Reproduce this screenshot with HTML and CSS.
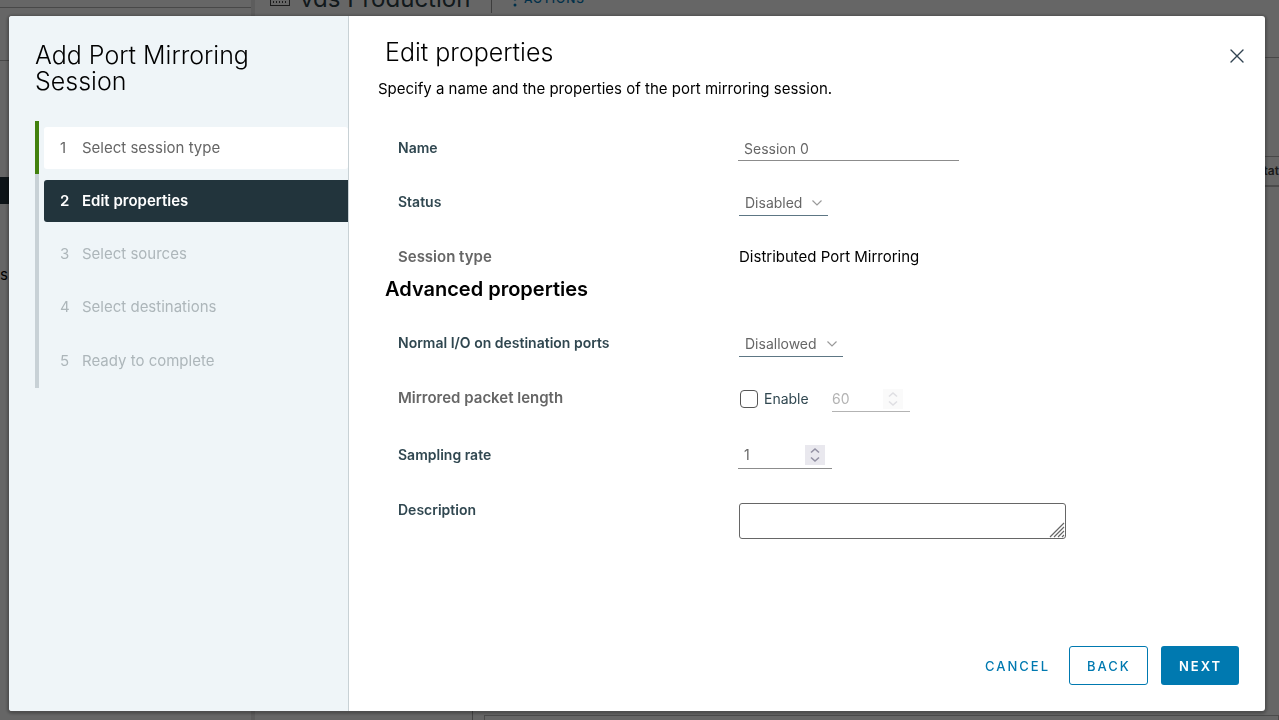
FILE: index.html
```html
<!DOCTYPE html>
<html lang="en">
<head>
<meta charset="utf-8">
<title>Add Port Mirroring Session</title>
<link rel="stylesheet" href="styles.css">
</head>
<body>
<div class="app" aria-hidden="true">
  <div class="app-nav">
    <div class="app-nav-tabs"></div>
    <div class="app-nav-filter"></div>
    <div class="app-nav-tree"></div>
    <div class="app-nav-selected"></div>
    <div class="app-nav-item">s</div>
  </div>
  <div class="app-gutter"></div>
  <div class="app-main">
    <div class="app-header">
      <svg class="app-icon" width="20" height="16" viewBox="0 0 20 16" fill="none" stroke="currentColor"><rect x="0.5" y="1.5" width="19" height="14"/><path d="M3.5 11v2M6.5 11v2M9.5 11v2M12.5 11v2M15.5 11v2"/></svg>
      <span class="app-name">vds Production</span>
      <span class="app-rule"></span>
      <svg class="app-dots" width="4" height="16" viewBox="0 0 4 16" fill="currentColor"><circle cx="2" cy="2" r="1.500"/><circle cx="2" cy="8" r="1.500"/><circle cx="2" cy="14" r="1.500"/></svg>
      <span class="app-actions">ACTIONS</span>
    </div>
    <div class="app-panel"></div>
    <div class="app-columns">Stat</div>
    <div class="app-body"></div>
    <div class="app-footer"><div class="app-footer-left"></div><div class="app-footer-gap"></div><div class="app-footer-right"></div></div>
  </div>
</div>

<div class="backdrop">
  <div class="wizard" role="dialog" aria-modal="true" aria-labelledby="wizard-title">
    <aside class="sidebar">
      <h1 class="wizard-title" id="wizard-title">Add Port Mirroring Session</h1>
      <nav class="steps" aria-label="Steps">
        <div class="step step-done"><button class="step-button" type="button"><span class="step-number">1</span>Select session type</button></div>
        <div class="step step-current"><button class="step-button" type="button" aria-current="step"><span class="step-number">2</span>Edit properties</button></div>
        <div class="step"><button class="step-button" type="button" disabled><span class="step-number">3</span>Select sources</button></div>
        <div class="step"><button class="step-button" type="button" disabled><span class="step-number">4</span>Select destinations</button></div>
        <div class="step"><button class="step-button" type="button" disabled><span class="step-number">5</span>Ready to complete</button></div>
      </nav>
    </aside>
    <main class="content">
      <header class="content-header">
        <h2 class="page-title">Edit properties</h2>
        <button class="close" type="button" aria-label="Close"><svg width="14" height="14" viewBox="0 0 14 14" fill="none" stroke="currentColor" stroke-width="1.4" stroke-linecap="round"><path d="M1 1l12 12M13 1L1 13"/></svg></button>
      </header>
      <p class="intro">Specify a name and the properties of the port mirroring session.</p>
      <form class="form">
        <div class="group">
          <div class="row">
            <label class="label" for="name">Name</label>
            <input class="field name-field" id="name" type="text" value="Session 0">
          </div>
          <div class="row">
            <label class="label" for="status">Status</label>
            <span class="select-wrap">
              <select class="field select status-field" id="status"><option>Disabled</option><option>Enabled</option></select>
              <svg class="chevron" width="10" height="6" viewBox="0 0 10 6" fill="none" stroke="currentColor" stroke-width="1.200"><path d="M0.5 0.5L5 5l4.500-4.500"/></svg>
            </span>
          </div>
          <div class="row">
            <span class="label label-muted">Session type</span>
            <span class="value">Distributed Port Mirroring</span>
          </div>
        </div>
        <h3 class="section-title">Advanced properties</h3>
        <div class="group">
          <div class="row">
            <label class="label" for="normal-io">Normal I/O on destination ports</label>
            <span class="select-wrap">
              <select class="field select io-field" id="normal-io"><option>Disallowed</option><option>Allowed</option></select>
              <svg class="chevron" width="10" height="6" viewBox="0 0 10 6" fill="none" stroke="currentColor" stroke-width="1.200"><path d="M0.5 0.5L5 5l4.500-4.500"/></svg>
            </span>
          </div>
          <div class="row">
            <label class="label label-muted" for="length">Mirrored packet length</label>
            <div class="controls">
              <input class="checkbox" id="enable" type="checkbox">
              <label class="check-label" for="enable">Enable</label>
              <span class="number number-disabled">
                <input class="number-input" id="length" type="number" value="60" disabled>
                <svg class="spinner" width="20" height="20" viewBox="0 0 20 20" fill="none" stroke="currentColor" stroke-width="1.600"><path d="M6 7.500L10 4l4 3.500M6 12.500L10 16l4-3.500"/></svg>
              </span>
            </div>
          </div>
          <div class="row row-center">
            <label class="label" for="rate">Sampling rate</label>
            <span class="number number-wide">
              <input class="number-input" id="rate" type="number" value="1">
              <svg class="spinner" width="20" height="20" viewBox="0 0 20 20" fill="none" stroke="currentColor" stroke-width="1.600"><path d="M6 7.500L10 4l4 3.500M6 12.500L10 16l4-3.500"/></svg>
            </span>
          </div>
          <div class="row">
            <label class="label" for="description">Description</label>
            <span class="textarea-wrap">
              <textarea class="textarea" id="description" rows="1"></textarea>
              <svg class="grip" width="16" height="16" viewBox="0 0 16 16" fill="none" stroke="currentColor" stroke-width="1.200"><path d="M1 15L15 1M5 15L15 5M9 15l6-6M13 15l2-2"/></svg>
            </span>
          </div>
        </div>
      </form>
      <footer class="actions">
        <button class="button button-link" type="button">CANCEL</button>
        <button class="button button-outline" type="button">BACK</button>
        <button class="button button-primary" type="button">NEXT</button>
      </footer>
    </main>
  </div>
</div>
</body>
</html>
```
FILE: styles.css
```css
* { box-sizing: border-box; }

body {
  margin: 0;
  height: 100vh;
  overflow: hidden;
  background: #fff;
  color: #000;
  font: 15px/24px Inter, "Liberation Sans", sans-serif;
}

button, input, select, textarea { font: inherit; color: inherit; margin: 0; }
h1, h2, h3, p { margin: 0; font-weight: 400; }

/* Application behind the dialog */
.app { display: flex; height: 100vh; overflow: hidden; }
.app-nav { flex: 0 0 251px; }
.app-nav-tabs { height: 8px; border-bottom: 1px solid #b5b5b5; }
.app-nav-filter { height: 53px; border-bottom: 1px solid #b5b5b5; }
.app-nav-tree { height: 116px; }
.app-nav-selected { height: 27px; background: #22343c; }
.app-nav-item { padding-top: 59px; }
.app-gutter { flex: 0 0 4px; background: #e8e8e8; }
.app-main { flex: 1; min-width: 0; display: flex; flex-direction: column; }
.app-header {
  flex: 0 0 78px;
  margin-top: -20px;
  padding: 0 15px;
  display: flex;
  align-items: flex-start;
  border-bottom: 1px solid #b5b5b5;
  color: #2d4048;
}
.app-icon { margin: 10px 10px 0 0; color: #444; }
.app-name { flex: 0 0 191px; margin-top: 3px; font-size: 24px; line-height: 32px; white-space: nowrap; }
.app-rule { width: 1px; height: 33px; margin-right: 21px; background: #999; }
.app-dots { margin: 11px 7px 0 0; color: #0079b8; }
.app-actions { margin-top: 11px; color: #0079b8; font-size: 12px; line-height: 16px; letter-spacing: 1px; font-weight: 500; }
.app-panel { flex: 0 0 99px; border-bottom: 1px solid #b5b5b5; }
.app-columns { flex: 0 0 29px; border-bottom: 2px solid #bbb; text-align: right; font-size: 12px; line-height: 28px; font-weight: 600; color: #444; }
.app-body { flex: 1; }
.app-footer { flex: 0 0 12px; display: flex; }
.app-footer-left { width: 218px; border-right: 1px solid #aaa; }
.app-footer-gap { width: 11px; }
.app-footer-right { flex: 1; margin-top: 7px; border: 1px solid #bbb; border-bottom: 0; }

/* Dialog */
.backdrop {
  position: fixed;
  inset: 0;
  display: flex;
  padding: 16px 14px 9px 9px;
  background: rgba(0, 0, 0, 0.6);
}
.wizard {
  flex: 1;
  display: flex;
  overflow: hidden;
  background: #fff;
  border-radius: 3px;
  box-shadow: 0 1px 3px 2px rgba(0, 0, 0, 0.25);
}

/* Steps */
.sidebar { flex: 0 0 340px; padding: 26px 0 0 26px; background: #eff5f8; border-right: 1px solid #c8d1d5; }
.wizard-title { width: 240px; margin-bottom: 27px; font-size: 25px; line-height: 26px; font-weight: 300; }
.step { display: flex; align-items: center; height: 53px; padding-left: 5px; border-left: 4px solid #c8d1d6; }
.step:last-child { height: 55px; }
.step-done { border-left-color: #42810e; }
.step-button {
  flex: 1;
  display: flex;
  height: 42px;
  padding: 0 16px;
  align-items: center;
  border: 0;
  border-radius: 3px;
  background: transparent;
  color: #adb6ba;
  text-align: left;
}
.step-number { flex: 0 0 22px; }
.step-done .step-button { background: #fff; color: #666; }
.step-current .step-button { background: #22343c; color: #fff; font-weight: 600; border-radius: 3px 0 0 3px; }

/* Page */
.content { flex: 1; min-width: 0; display: flex; flex-direction: column; padding: 20px 26px 26px 29px; }
.content-header { display: flex; justify-content: space-between; padding-left: 7px; }
.page-title { font-size: 25px; line-height: 32px; font-weight: 300; }
.close { display: grid; place-items: center; width: 20px; height: 20px; margin: 10px -8px 0 0; padding: 0; border: 0; background: none; color: #314351; }
.intro { margin-top: 9px; }
.form { flex: 1; padding: 35px 0 0 7px; }
.group { display: flex; flex-direction: column; gap: 29px; padding-left: 13px; }
.row { display: grid; grid-template-columns: 340px minmax(0, 1fr); align-items: start; justify-items: start; }
.row-center { align-items: center; }
.label { font-size: 14px; font-weight: 600; color: #304750; }
.label-muted { font-size: 15px; color: #666; }
.section-title { margin: 8px 0 30px; font-size: 20px; line-height: 24px; font-weight: 600; }
.value { margin-left: 1px; }

.field {
  height: 25px;
  padding: 0 6px;
  border: 0;
  border-bottom: 1px solid #8c8c8c;
  border-radius: 0;
  background: transparent;
  color: #666;
  font-size: 14px;
}
.name-field { width: 221px; }
.select-wrap { position: relative; display: flex; margin-left: 1px; }
.select { appearance: none; height: 26px; border-color: #5d7684; }
.status-field { width: 89px; }
.io-field { width: 104px; }
.chevron { position: absolute; right: 6px; top: 10px; color: #9a9a9a; pointer-events: none; }

.controls { display: flex; align-items: center; padding-left: 2px; }
.checkbox { appearance: none; width: 18px; height: 18px; border: 1px solid #565656; border-radius: 4px; background: #fff; }
.check-label { width: 74px; padding-left: 6px; color: #304750; font-size: 14px; }
.number { display: flex; align-items: center; height: 26px; border-bottom: 1px solid #8c8c8c; color: #666; font-size: 14px; }
.number-input { appearance: textfield; width: 51px; padding: 0; border: 0; background: transparent; color: inherit; }
.number-input::-webkit-inner-spin-button { appearance: none; margin: 0; }
.number-wide { height: 28px; padding-left: 6px; }
.number-wide .number-input { width: 61px; }
.spinner { margin-right: 7px; background: #e9e8ee; color: #9391a3; }
.number-disabled { border-color: #b3b3b3; color: #b3b3b3; }
.number-disabled .spinner { background: #fafafa; color: #dfdfe3; }

.textarea-wrap { position: relative; display: flex; width: 327px; max-width: 100%; margin: 5px 0 0 1px; }
.textarea { width: 100%; height: 36px; padding: 5px 8px; border: 1px solid #666; border-radius: 3px; background: #fff; resize: none; }
.grip { position: absolute; right: 1px; bottom: 1px; color: #666; pointer-events: none; }

.actions { display: flex; justify-content: flex-end; }
.button { height: 39px; padding: 0 17px; border: 1px solid transparent; border-radius: 3px; background: none; color: #0079b0; font-size: 13px; font-weight: 500; letter-spacing: 2px; white-space: nowrap; }
.button-link { padding: 0 18px; }
.button-outline { width: 79px; margin-right: 13px; border-color: #0079b0; }
.button-primary { width: 78px; background: #0079b0; color: #fff; font-weight: 600; }
```
